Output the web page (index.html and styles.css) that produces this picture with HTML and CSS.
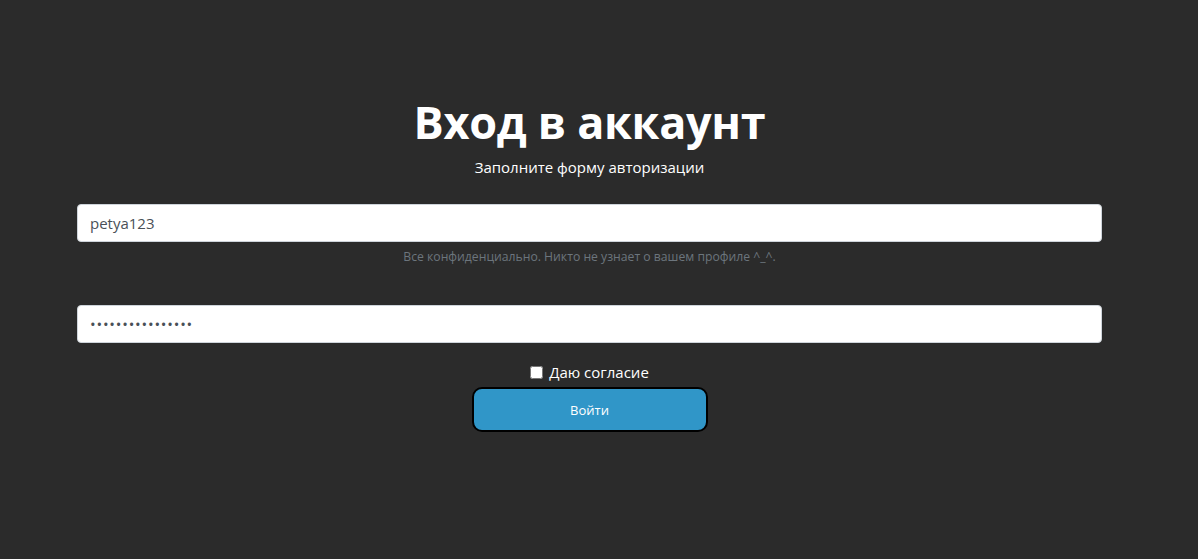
FILE: index.html
```html
<!DOCTYPE html>
<html lang="ru">
<head>
<meta charset="utf-8">
<link rel="stylesheet" href="styles.css">
</head>
<body>
<main class="page">
  <h1 class="title">Вход в аккаунт</h1>
  <p class="subtitle">Заполните форму авторизации</p>
  <form class="form">
    <div class="group">
      <input class="input" type="text" value="petya123">
      <small class="help">Все конфиденциально. Никто не узнает о вашем профиле ^_^.</small>
    </div>
    <div class="group group-pass">
      <input class="input input-pass" type="password" value="1234567890123456">
    </div>
    <label class="check"><input type="checkbox" class="box"> Даю согласие</label>
    <button type="button" class="btn">Войти</button>
  </form>
</main>
</body>
</html>
```

FILE: styles.css
```css
html, body {
  margin: 0;
  padding: 0;
  background: #2b2b2b;
  height: 100%;
}
body {
  font-family: "Open Sans", "Noto Sans", sans-serif;
  color: #fff;
}
.page {
  width: 1025px;
  margin-left: 77px;
  padding-top: 89px;
  display: flex;
  flex-direction: column;
  align-items: center;
}
.title {
  margin: 0;
  font-size: 45px;
  font-weight: 700;
  line-height: 66px;
  letter-spacing: -0.3px;
}
.subtitle {
  margin: 0;
  font-size: 15px;
  line-height: 24px;
}
.form {
  width: 100%;
  margin-top: 25px;
  display: flex;
  flex-direction: column;
  align-items: center;
}
.group {
  width: 100%;
  display: flex;
  flex-direction: column;
  align-items: center;
}
.group-pass {
  margin-top: 39px;
}
.input {
  box-sizing: border-box;
  width: 100%;
  height: 38px;
  padding: 6px 12px;
  font-family: inherit;
  font-size: 15px;
  color: #495057;
  background: #fff;
  border: 1px solid #ced4da;
  border-radius: 4px;
  outline: none;
}
.input-pass {
  letter-spacing: 0.8px;
}
.help {
  margin-top: 6px;
  font-size: 12.2px;
  color: #6c757d;
  line-height: 18px;
}
.check {
  margin-top: 18px;
  font-size: 15px;
  line-height: 22px;
  display: flex;
  align-items: center;
  gap: 6px;
}
.box {
  margin: 0;
  width: 13px;
  height: 13px;
}
.btn {
  margin-top: 4px;
  width: 236px;
  height: 45px;
  background: #3096c8;
  color: #fff;
  border: 2px solid #000;
  border-radius: 10px;
  font-family: inherit;
  font-size: 13px;
}
```
